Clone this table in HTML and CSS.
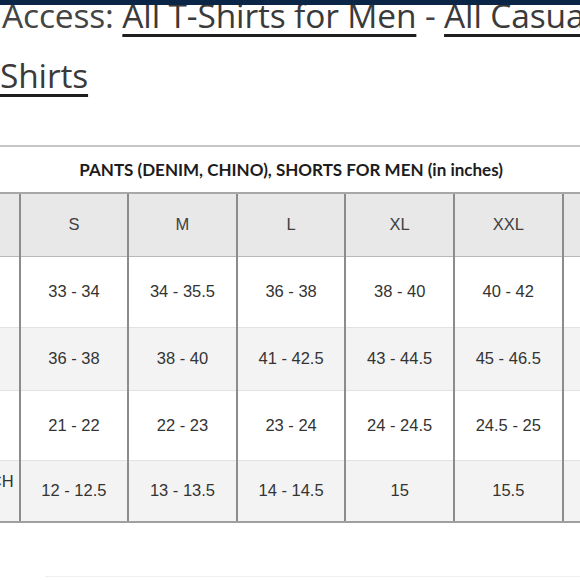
FILE: index.html
```html
<!DOCTYPE html>
<html lang="en">
<head>
<meta charset="utf-8">
<title>Size chart</title>
<link rel="stylesheet" href="styles.css">
</head>
<body>
<div class="topbar"></div>
<main class="content">
  <p class="access">Access: <a href="#">All T-Shirts for Men</a> - <a href="#">All Casual Shirts</a></p>
  <div class="chart-wrap">
    <table class="chart">
      <colgroup>
        <col><col><col><col><col><col><col>
      </colgroup>
      <tr class="title-row"><th colspan="7" class="title">PANTS (DENIM, CHINO), SHORTS FOR MEN (in inches)</th></tr>
      <tr class="head-row h63"><th></th><th>S</th><th>M</th><th>L</th><th>XL</th><th>XXL</th><th>XXXL</th></tr>
      <tr class="odd h71"><td>WAIST</td><td>33 - 34</td><td>34 - 35.5</td><td>36 - 38</td><td>38 - 40</td><td>40 - 42</td><td>42 - 44</td></tr>
      <tr class="even h63"><td>HIP</td><td>36 - 38</td><td>38 - 40</td><td>41 - 42.5</td><td>43 - 44.5</td><td>45 - 46.5</td><td>47 - 48.5</td></tr>
      <tr class="odd h70"><td>THIGH</td><td>21 - 22</td><td>22 - 23</td><td>23 - 24</td><td>24 - 24.5</td><td>24.5 - 25</td><td>25 - 26</td></tr>
      <tr class="even last h62"><td class="crotch">CROTCH</td><td>12 - 12.5</td><td>13 - 13.5</td><td>14 - 14.5</td><td>15</td><td>15.5</td><td>16</td></tr>
    </table>
  </div>
  <div class="rule"></div>
</main>
</body>
</html>
```

FILE: styles.css
```css
html, body {
  margin: 0;
  padding: 0;
  background: #ffffff;
  overflow: hidden;
}

body {
  font-family: "Open Sans", "Noto Sans", sans-serif;
  color: #444444;
}

.topbar {
  position: fixed;
  top: 0;
  left: 0;
  right: 0;
  height: 5px;
  background: #0b2547;
  z-index: 2;
}

.content {
  display: flex;
  flex-direction: column;
}

.access {
  margin: -15px 0 0 0;
  font-size: 33.5px;
  font-weight: 400;
  line-height: 60px;
  text-indent: 2px;
  letter-spacing: -0.15px;
  width: 640px;
}

.access a {
  color: #3a3a3a;
  text-decoration: underline;
  text-decoration-color: #1e1e1e;
  text-decoration-thickness: 2.5px;
  text-underline-offset: 6px;
}

.chart-wrap {
  margin-top: 40px;
  margin-left: -90px;
  width: 760px;
}

.chart {
  width: 760px;
  table-layout: fixed;
  border-collapse: collapse;
  font-family: "Liberation Sans", Arial, sans-serif;
  font-size: 16.5px;
  color: #333333;
  border-top: 2px solid #c6c6c6;
}

.chart col {
  width: 108.6px;
}

.title-row {
  height: 47px;
  background: #ffffff;
}

.title {
  font-family: Lato, "Open Sans", sans-serif;
  font-weight: 700;
  font-size: 17px;
  color: #1c1c1c;
  text-align: center;
  border-bottom: 2px solid #a8a8a8;
  padding: 0;
}

.head-row th {
  background: #e8e8e8;
  font-weight: 400;
  color: #404040;
  border-left: 2px solid #8c8c8c;
  border-right: 2px solid #8c8c8c;
  border-bottom: 1px solid #b8b8b8;
  text-align: center;
  padding: 0;
}

.chart td {
  text-align: center;
  padding: 0;
  border-left: 2px solid #8c8c8c;
  border-right: 2px solid #8c8c8c;
  border-bottom: 1px solid #e2e2e2;
}

.odd td {
  background: #ffffff;
}

.even td {
  background: #f3f3f3;
}

.last td {
  border-bottom: 2px solid #a0a0a0;
}

.chart td.crotch {
  text-align: right;
  padding: 0 5px 18px 0;
}

.h63 { height: 63px; }
.h71 { height: 71px; }
.h70 { height: 70px; }
.h62 { height: 62px; }

.rule {
  margin-top: 53px;
  margin-left: 45px;
  height: 1px;
  background: #f0f0f0;
}
```
